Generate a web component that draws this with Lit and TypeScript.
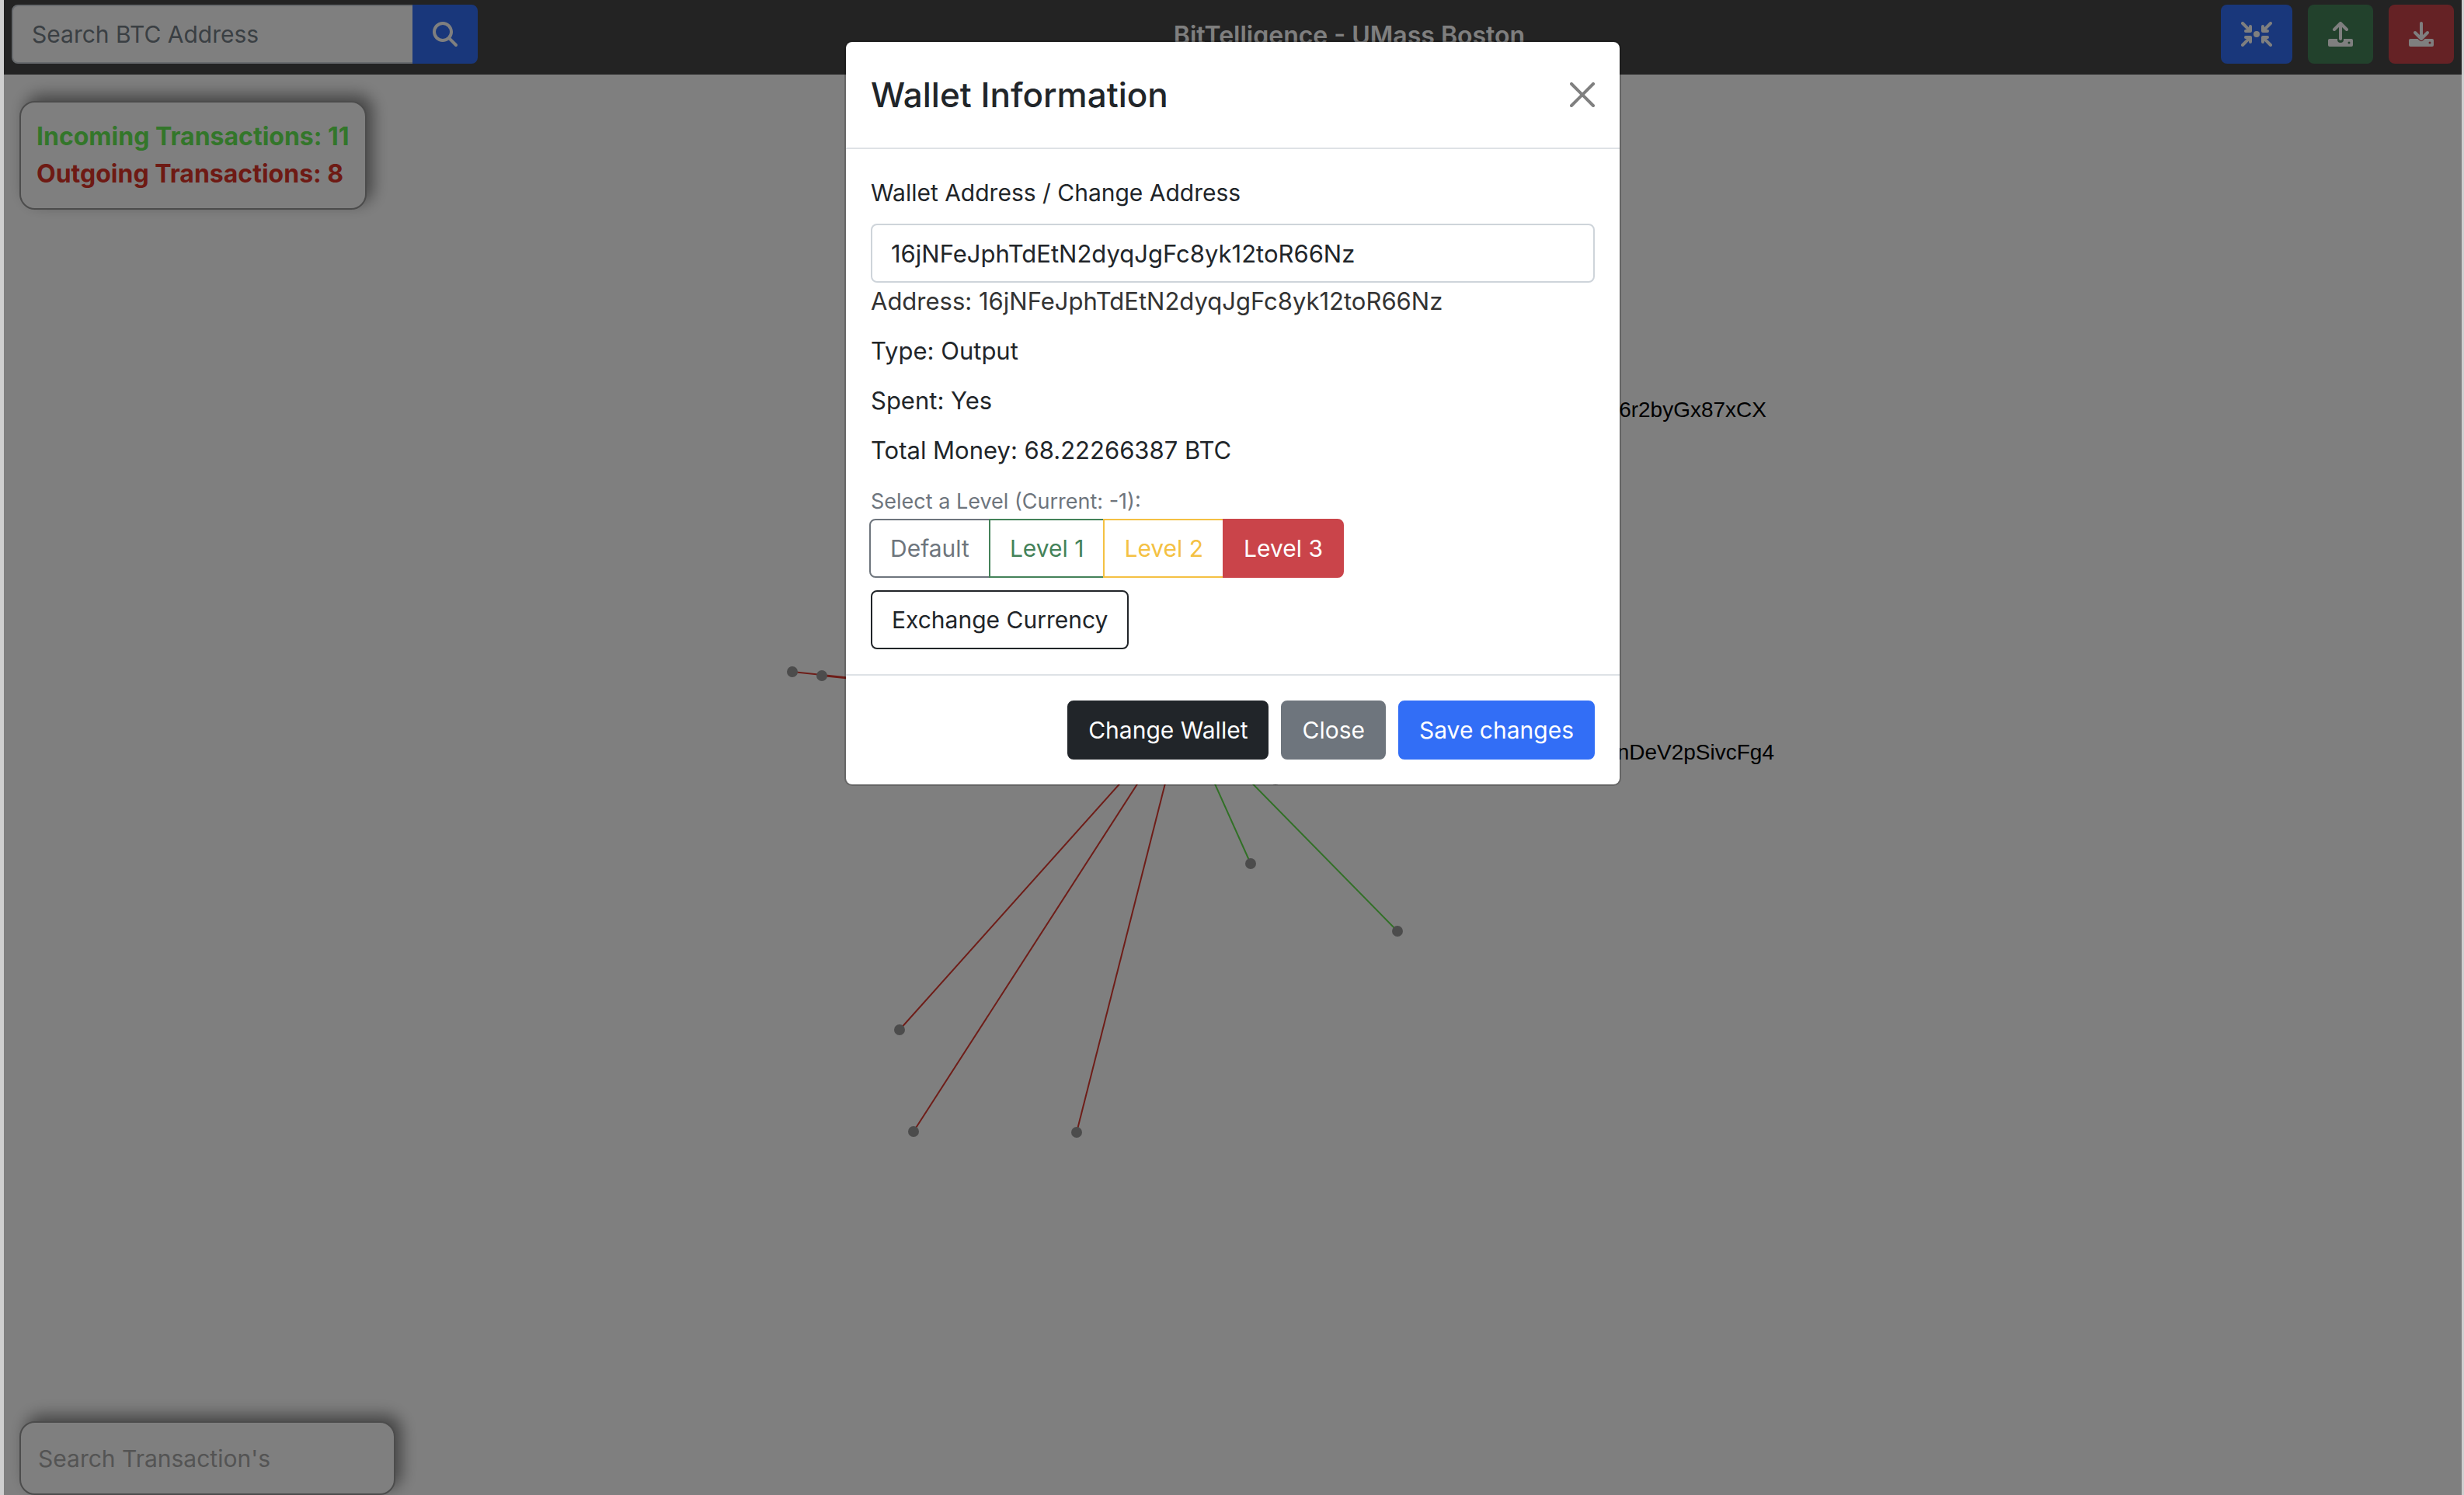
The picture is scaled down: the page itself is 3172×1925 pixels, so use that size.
import { LitElement, html, css, svg } from "lit";
import { customElement, state } from "lit/decorators.js";

interface Point { x: number; y: number }
interface Edge extends Point { kind: "in" | "out" }

const HUB: Point = { x: 1518, y: 918 };

const EDGES: Edge[] = [
  { x: 1015, y: 865, kind: "out" },
  { x: 1053, y: 870, kind: "out" },
  { x: 1153, y: 1326, kind: "out" },
  { x: 1171, y: 1457, kind: "out" },
  { x: 1381, y: 1458, kind: "out" },
  { x: 1605, y: 1112, kind: "in" },
  { x: 1794, y: 1199, kind: "in" },
];

const LABELS = [
  { x: 2269, y: 537, text: "6r2byGx87xCX" },
  { x: 2279, y: 978, text: "nDeV2pSivcFg4" },
];

const LEVELS = [
  { name: "Default", cls: "secondary" },
  { name: "Level 1", cls: "success" },
  { name: "Level 2", cls: "warning" },
  { name: "Level 3", cls: "danger" },
];

const ADDRESS = "16jNFeJphTdEtN2dyqJgFc8yk12toR66Nz";

const searchIcon = html`<svg class="icon" viewBox="0 0 512 512" aria-hidden="true">
  <path fill="currentColor" d="M416 208c0 45.9-14.9 88.3-40 122.7L502.6 457.4c12.5 12.5 12.5 32.8 0 45.3s-32.8 12.5-45.3 0L330.7 376c-34.4 25.2-76.8 40-122.7 40C93.1 416 0 322.9 0 208S93.1 0 208 0S416 93.1 416 208zM208 352a144 144 0 1 0 0-288 144 144 0 1 0 0 288z"/>
</svg>`;

const arm = "M.6.6a2 2 0 0 1 2.8 0L10 7.2V6a2 2 0 0 1 4 0v6a2 2 0 0 1-2 2H6a2 2 0 0 1 0-4h1.2L.6 3.4a2 2 0 0 1 0-2.8z";
const centerIcon = html`<svg class="icon wide" viewBox="0 0 40 32" fill="currentColor" aria-hidden="true">
  <path d=${arm}/>
  <path d=${arm} transform="matrix(-1 0 0 1 40 0)"/>
  <path d=${arm} transform="matrix(1 0 0 -1 0 32)"/>
  <path d=${arm} transform="matrix(-1 0 0 -1 40 32)"/>
  <circle cx="20" cy="16" r="4"/>
</svg>`;

const trayIcon = (cut: string, arrow: string) => html`<svg class="icon" viewBox="0 0 32 32" fill="none" stroke-linecap="round" stroke-linejoin="round" aria-hidden="true">
  <rect x="0" y="22" width="32" height="10" rx="2" fill="currentColor"/>
  <circle class="cut-fill" cx="27" cy="27" r="1.5"/>
  <path class="cut" stroke-width="8" d=${cut}/>
  <path stroke="currentColor" stroke-width="4" d=${arrow}/>
</svg>`;
const uploadIcon = trayIcon("M16 18V23", "M16 22V3M8 10L16 2L24 10");
const downloadIcon = trayIcon("M13 18L16 21L19 18", "M16 2V21M8 14L16 22L24 14");

const closeIcon = html`<svg class="icon" viewBox="0 0 16 16" aria-hidden="true">
  <path fill="currentColor" d="M.293.293a1 1 0 0 1 1.414 0L8 6.586 14.293.293a1 1 0 1 1 1.414 1.414L9.414 8l6.293 6.293a1 1 0 0 1-1.414 1.414L8 9.414l-6.293 6.293a1 1 0 0 1-1.414-1.414L6.586 8 .293 1.707a1 1 0 0 1 0-1.414z"/>
</svg>`;

@customElement("app-root")
export class AppRoot extends LitElement {
  static styles = css`
    :host {
      display: block;
      min-height: 100vh;
      box-sizing: border-box;
      padding: 0 3px 0 5px;
      background: #cfcfcf;
      color: #212529;
      font: 400 30px/48px Inter, "Liberation Sans", sans-serif;
    }
    * { box-sizing: border-box; }
    h1, h2, p { margin: 0; }
    button, input { font: inherit; margin: 0; }
    button { cursor: pointer; }

    .page {
      position: relative;
      display: flex;
      flex-direction: column;
      min-height: 100vh;
      overflow: hidden;
      background: #fff;
    }

    .bar {
      display: flex;
      align-items: center;
      justify-content: space-between;
      padding: 6px 10px 14px;
      background: #464646;
    }
    .bar h1 {
      padding-top: 4px;
      color: #fff;
      font-size: 32px;
      font-weight: 600;
      line-height: 48px;
    }
    .search { display: flex; }
    .search .field {
      width: 518px;
      border-radius: 8px 0 0 8px;
    }
    .search .btn { margin-left: -2px; border-radius: 0 8px 8px 0; }
    .tools { display: flex; gap: 20px; }

    .icon { display: block; width: 32px; height: 32px; }
    .icon.wide { width: 40px; }

    .field {
      padding: 12px 24px;
      border: 2px solid #ced4da;
      border-radius: 8px;
      background: #fff;
      color: #212529;
      line-height: 48px;
      height: 76px;
      outline: 0;
    }
    .field::placeholder { color: #757f87; opacity: 1; }

    .btn {
      display: flex;
      align-items: center;
      justify-content: center;
      min-height: 76px;
      padding: 12px 24px;
      border: 2px solid var(--tone);
      border-radius: 8px;
      background: var(--tone);
      color: #fff;
      white-space: nowrap;
    }
    .modal .btn { padding: 12px 25px; }
    .btn.outline { background: transparent; color: var(--tone); }
    .primary { --tone: #326ef6; }
    .secondary { --tone: #6e757d; }
    .success { --tone: #448259; }
    .warning { --tone: #f4c143; }
    .danger { --tone: #ca444a; }
    .dark { --tone: #212529; }
    .cut { stroke: var(--tone); }
    .cut-fill { fill: var(--tone); }

    .canvas {
      flex: 1;
      display: flex;
      flex-direction: column;
      align-items: flex-start;
      justify-content: space-between;
      padding: 34px 20px 0;
    }
    .graph { position: absolute; inset: 0; width: 100%; height: 100%; }
    .edge { stroke-width: 2; }
    .edge.in { stroke: #62e04c; }
    .edge.out { stroke: #dc3a30; }
    .node { fill: #999; }
    .caption { font: 28px "Liberation Sans", sans-serif; fill: #000; text-anchor: end; }

    .card {
      position: relative;
      border: 2px solid #999;
      border-radius: 20px;
      background: #fff;
      box-shadow: 8px -8px 20px #8c8c8c;
    }
    .totals { padding: 20px; font-size: 32px; font-weight: 700; }
    .totals .in { color: #66ec54; }
    .totals .out { color: #dc3428; }
    .tx {
      width: 484px;
      height: 95px;
      padding: 20px 22px;
      outline: 0;
    }
    .tx::placeholder { color: #a9a9a9; opacity: 1; }

    .backdrop {
      position: absolute;
      inset: 0;
      display: flex;
      align-items: flex-start;
      justify-content: center;
      padding-top: 52px;
      background: rgba(0, 0, 0, 0.5);
    }
    .modal {
      width: 100%;
      max-width: 1000px;
      border: 2px solid rgba(0, 0, 0, 0.2);
      border-radius: 10px;
      background: #fff;
      background-clip: padding-box;
    }
    .head {
      display: flex;
      align-items: center;
      justify-content: space-between;
      padding: 32px;
      border-bottom: 2px solid #dee2e6;
    }
    .head h2 { font-size: 44px; font-weight: 500; line-height: 72px; }
    .close { padding: 0; border: 0; background: none; color: #808080; }
    .body {
      display: flex;
      flex-direction: column;
      align-items: flex-start;
      gap: 16px;
      padding: 32px;
    }
    .address { display: flex; flex-direction: column; width: 100%; }
    .address label { margin-bottom: 16px; }
    .detail { font-size: 31px; }
    .muted { color: #333; }
    .hint { padding-top: 4px; color: #6e757d; font-size: 27px; line-height: 44px; }
    .levels { display: flex; margin-left: -2px; }
    .levels .btn { border-radius: 0; }
    .levels .btn + .btn { margin-left: -2px; }
    .levels .btn:first-child { border-radius: 8px 0 0 8px; }
    .levels .btn:last-child { border-radius: 0 8px 8px 0; }
    .foot {
      display: flex;
      justify-content: flex-end;
      gap: 16px;
      padding: 32px;
      border-top: 2px solid #dee2e6;
    }
  `;

  @state() private active = 3;

  private graph() {
    return html`<svg class="graph" aria-hidden="true">
      ${EDGES.map((e) => svg`<line class="edge ${e.kind}" x1=${HUB.x} y1=${HUB.y} x2=${e.x} y2=${e.y}/>`)}
      ${[...EDGES, { x: 1637, y: 1004 }].map((n) => svg`<circle class="node" cx=${n.x} cy=${n.y} r="7"/>`)}
      ${LABELS.map((l) => svg`<text class="caption" x=${l.x} y=${l.y}>${l.text}</text>`)}
    </svg>`;
  }

  private modal() {
    return html`<div class="backdrop">
      <section class="modal" role="dialog" aria-modal="true" aria-labelledby="title">
        <header class="head">
          <h2 id="title">Wallet Information</h2>
          <button class="close" type="button" aria-label="Close dialog">${closeIcon}</button>
        </header>
        <div class="body">
          <div class="address">
            <label for="address">Wallet Address / Change Address</label>
            <input class="field detail" id="address" type="text" .value=${ADDRESS} />
            <p class="detail muted">Address: ${ADDRESS}</p>
          </div>
          <p class="detail">Type: Output</p>
          <p class="detail">Spent: Yes</p>
          <p class="detail">Total Money: 68.22266387 BTC</p>
          <div>
            <p class="hint" id="level">Select a Level (Current: -1):</p>
            <div class="levels" role="group" aria-labelledby="level">
              ${LEVELS.map((l, i) => html`<button type="button"
                class="btn ${l.cls} ${i === this.active ? "" : "outline"}"
                aria-pressed=${i === this.active}
                @click=${() => (this.active = i)}>${l.name}</button>`)}
            </div>
          </div>
          <button class="btn outline dark" type="button">Exchange Currency</button>
        </div>
        <footer class="foot">
          <button class="btn dark" type="button">Change Wallet</button>
          <button class="btn secondary" type="button">Close</button>
          <button class="btn primary" type="button">Save changes</button>
        </footer>
      </section>
    </div>`;
  }

  render() {
    return html`<div class="page">
      <header class="bar">
        <form class="search" @submit=${(e: Event) => e.preventDefault()}>
          <input class="field" type="text" placeholder="Search BTC Address" aria-label="Search BTC Address" />
          <button class="btn primary" type="submit" aria-label="Search">${searchIcon}</button>
        </form>
        <h1>BitTelligence - UMass Boston</h1>
        <div class="tools">
          <button class="btn primary" type="button" aria-label="Center graph">${centerIcon}</button>
          <button class="btn success" type="button" aria-label="Upload">${uploadIcon}</button>
          <button class="btn danger" type="button" aria-label="Download">${downloadIcon}</button>
        </div>
      </header>
      <main class="canvas">
        ${this.graph()}
        <div class="card totals">
          <p class="in">Incoming Transactions: 11</p>
          <p class="out">Outgoing Transactions: 8</p>
        </div>
        <input class="card tx" type="text" placeholder="Search Transaction's" aria-label="Search Transaction's" />
      </main>
      ${this.modal()}
    </div>`;
  }
}
